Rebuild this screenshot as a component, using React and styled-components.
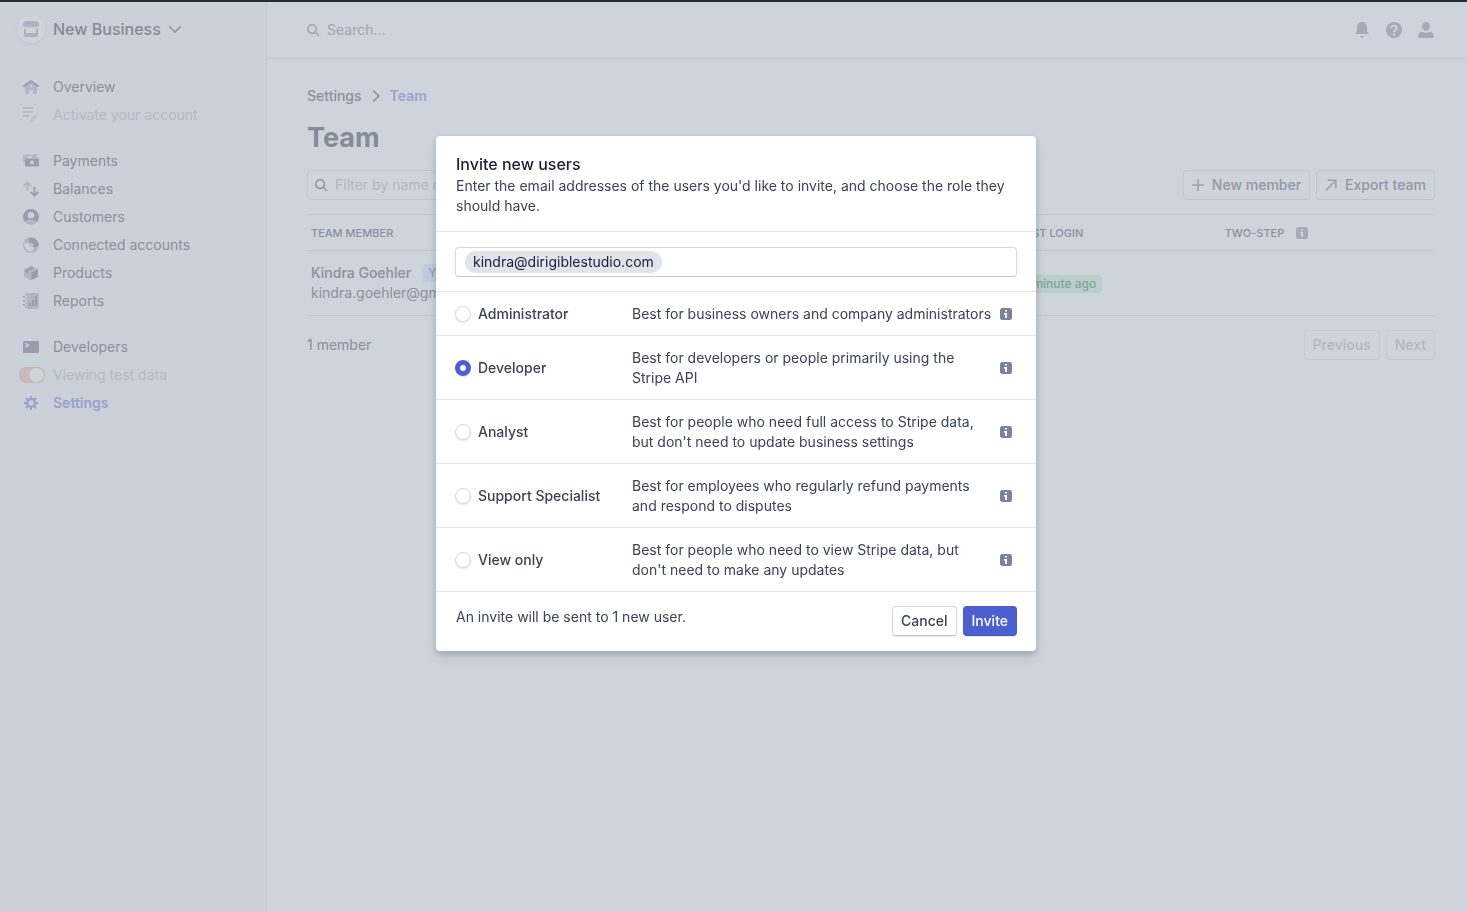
import { useState } from "react";
import styled, { createGlobalStyle } from "styled-components";

const GlobalStyle = createGlobalStyle`
  * {
    box-sizing: border-box;
  }
  body {
    margin: 0;
    background: #cdd4dc;
    color: #8b909e;
    font-family: Inter, "Liberation Sans", sans-serif;
    font-size: 14px;
    line-height: 20px;
  }
  button, input {
    font: inherit;
  }
  h1, h2, p {
    margin: 0;
  }
  svg {
    display: block;
    flex: none;
  }
`;

// ---------- layout ----------

const Page = styled.div`
  display: grid;
  grid-template-columns: 267px 1fr;
  min-height: 100vh;
  border-top: 2px solid #2b2c33;
`;

const Sidebar = styled.aside`
  background: #cad1d9;
  border-right: 1px solid #c2c9d4;
`;

const Content = styled.div`
  min-width: 0;
`;

// ---------- sidebar ----------

const AccountButton = styled.button`
  display: flex;
  align-items: center;
  gap: 8px;
  height: 54px;
  padding: 0 17px;
  border: 0;
  background: none;
  color: #858b98;
  font-size: 16px;
  font-weight: 500;
`;

const Avatar = styled.span`
  display: grid;
  place-items: center;
  width: 28px;
  height: 28px;
  border-radius: 50%;
  background: #cdd4dc;
  box-shadow: 0 1px 3px rgba(110, 120, 150, 0.12);
`;

const NavGroup = styled.nav`
  margin-top: ${(props) => (props.$first ? "17px" : "18px")};
`;

const NavItem = styled.a`
  display: flex;
  align-items: center;
  gap: 8px;
  height: 28px;
  padding: 0 17px;
  color: ${(props) => (props.$active ? "#98a0cf" : props.$muted ? "#b3bac5" : "#8b909e")};
  font-weight: ${(props) => (props.$active ? 600 : 400)};
  text-decoration: none;
`;

const IconSlot = styled.span`
  display: grid;
  place-items: center ${(props) => (props.$end ? "end" : "center")};
  width: 28px;
`;

const Toggle = styled.input`
  appearance: none;
  width: 26px;
  height: 16px;
  margin: 0;
  border-radius: 8px;
  background: radial-gradient(circle at 18px 8px, #cdd4dc 7px, #cbb9bb 8px);
  box-shadow: inset 0 0 0 1px #caaeb0;
`;

// ---------- top bar ----------

const TopBar = styled.header`
  display: flex;
  align-items: center;
  justify-content: space-between;
  height: 57px;
  padding: 0 33px 0 40px;
  border-bottom: 1px solid #c3cad4;
`;

const SearchBox = styled.label`
  display: flex;
  align-items: center;
  gap: 8px;
`;

const PlainInput = styled.input`
  flex: 1;
  min-width: 0;
  padding: 0;
  border: 0;
  outline: 0;
  background: none;
  color: inherit;
  &::placeholder {
    color: ${(props) => props.$hint || "#9fa5b2"};
    opacity: 1;
  }
`;

const TopActions = styled.div`
  display: flex;
  gap: 16px;
`;

const IconButton = styled.button`
  padding: 0;
  border: 0;
  background: none;
  color: #a5abba;
`;

// ---------- team page ----------

const Main = styled.main`
  padding: 27px 32px 40px 40px;
`;

const Breadcrumb = styled.nav`
  display: flex;
  align-items: center;
  gap: 8px;
`;

const Crumb = styled.a`
  color: ${(props) => (props.$current ? "#9ba3d1" : "#8b909e")};
  font-weight: ${(props) => (props.$current ? 600 : 500)};
  text-decoration: none;
`;

const Title = styled.h1`
  margin: 16px 0;
  color: #868b98;
  font-size: 27px;
  font-weight: 700;
  line-height: 32px;
`;

const Toolbar = styled.div`
  display: flex;
  align-items: center;
  justify-content: space-between;
  margin-bottom: 14px;
`;

const FilterBox = styled.label`
  display: flex;
  align-items: center;
  gap: 8px;
  width: 240px;
  height: 30px;
  padding: 0 7px;
  border: 1px solid #c1c8d1;
  border-radius: 4px;
`;

const ButtonRow = styled.div`
  display: flex;
  gap: 6px;
`;

const GhostButton = styled.button`
  display: flex;
  align-items: center;
  gap: 8px;
  height: 30px;
  padding: 0 8px;
  border: 1px solid ${(props) => (props.disabled ? "#c6cdd5" : "#c3c9d2")};
  border-bottom-color: ${(props) => (props.disabled ? "#c3c9d2" : "#b9bfc9")};
  border-radius: 4px;
  background: none;
  color: ${(props) => (props.disabled ? "#b1b7c2" : "#9297a5")};
  font-weight: 500;
`;

const Table = styled.table`
  width: 100%;
  table-layout: fixed;
  border-collapse: separate;
  border-spacing: 0;
  border-top: 1px solid #c1c9d5;
`;

const HeadCell = styled.th`
  width: ${(props) => props.$width};
  height: 36px;
  padding: 0 4px;
  border-bottom: 1px solid #c1c9d5;
  color: #8b909e;
  font-size: 11px;
  font-weight: 500;
  text-align: left;
  text-transform: uppercase;
`;

const HeadLabel = styled.span`
  display: flex;
  align-items: center;
  gap: 12px;
`;

const Cell = styled.td`
  height: 65px;
  padding: 0 4px;
  border-bottom: 1px solid #c1c9d5;
  white-space: nowrap;
`;

const MemberName = styled.div`
  display: flex;
  align-items: center;
  gap: 11px;
  font-weight: 500;
`;

const Badge = styled.span`
  display: inline-block;
  padding: 0 6px;
  border-radius: 4px;
  background: ${(props) => (props.$green ? "#bacfc9" : "#bccddd")};
  color: ${(props) => (props.$green ? "#85a19f" : "#8d9fc4")};
  font-size: 12px;
  font-weight: 500;
  line-height: 18px;
`;

const TableFooter = styled.div`
  display: flex;
  align-items: center;
  justify-content: space-between;
  margin-top: 14px;
`;

// ---------- modal ----------

const Overlay = styled.div`
  position: fixed;
  inset: 0;
  display: flex;
  align-items: flex-start;
  justify-content: center;
  padding: 136px 15px 20px 20px;
`;

const Modal = styled.form`
  width: 100%;
  max-width: 600px;
  border-radius: 4px;
  background: #fff;
  color: #3c4257;
  box-shadow: 0 7px 14px rgba(60, 66, 87, 0.1), 0 3px 6px rgba(0, 0, 0, 0.18);
`;

const ModalHeader = styled.div`
  padding: 16px 20px 15px;
  border-bottom: 1px solid #e3e6ea;
`;

const ModalTitle = styled.h2`
  color: #1a1f36;
  font-size: 16px;
  font-weight: 500;
  line-height: 24px;
`;

const EmailSection = styled.div`
  padding: 15px 19px 14px;
  border-bottom: 1px solid #e3e6ea;
`;

const EmailField = styled.div`
  display: flex;
  align-items: center;
  gap: 6px;
  height: 30px;
  padding: 0 9px;
  border: 1px solid #d8dadf;
  border-bottom-color: #c6c9ce;
  border-radius: 4px;
`;

const Chip = styled.span`
  padding: 0 8px;
  border-radius: 11px;
  background: #e0e4eb;
  color: #1a1f36;
  line-height: 22px;
`;

const RoleRow = styled.div`
  display: grid;
  grid-template-columns: 177px 1fr 12px;
  align-items: center;
  padding: 12px 24px 11px 19px;
  border-bottom: 1px solid #e3e6ea;
`;

const RoleLabel = styled.label`
  display: flex;
  align-items: center;
  gap: 7px;
  font-weight: 500;
`;

const Radio = styled.input`
  appearance: none;
  width: 16px;
  height: 16px;
  margin: 0;
  border: 1px solid #d8dadf;
  border-radius: 50%;
  background: #fff;
  box-shadow: 0 1px 2px rgba(60, 66, 87, 0.12);
  &:checked {
    border: 5px solid #4b5fd0;
  }
`;

const RoleText = styled.p`
  padding-right: 6px;
`;

const ModalFooter = styled.div`
  display: flex;
  align-items: flex-start;
  justify-content: space-between;
  padding: 14px 19px 15px 20px;
`;

const FooterNote = styled.p`
  line-height: 22px;
`;

const ModalButton = styled.button`
  height: 30px;
  padding: 0 8px;
  border: 1px solid ${(props) => (props.$primary ? "#4b5fd0" : "#d6d8dd")};
  border-bottom-color: ${(props) => (props.$primary ? "#4356c0" : "#bfc2c8")};
  border-radius: 4px;
  background: ${(props) => (props.$primary ? "#4b5fd0" : "#fff")};
  color: ${(props) => (props.$primary ? "#fff" : "#3c4257")};
  font-weight: 500;
  box-shadow: 0 1px 2px rgba(60, 66, 87, 0.12);
`;

// ---------- icons ----------

const DARK = "#979eae";
const LIGHT = "#b0b7c4";

const Svg = ({ size = 16, children }) => (
  <svg width={size} height={size} viewBox="0 0 16 16" fill="none" aria-hidden="true">
    {children}
  </svg>
);

const StoreIcon = () => (
  <Svg>
    <path d="M2 0h12l2 2.800V4a2.200 2.200 0 0 1-4 1.200 2.200 2.200 0 0 1-4 0 2.200 2.200 0 0 1-4 0A2.200 2.200 0 0 1 0 4V2.800z" fill="#adb4c1" />
    <path d="M1 7.500h2V12h10V7.500h2v7a1.500 1.500 0 0 1-1.500 1.500h-11A1.500 1.500 0 0 1 1 14.500z" fill="#adb4c1" />
  </Svg>
);

const HomeIcon = () => (
  <Svg>
    <path d="M2 6.500 8 2l6 4.500V14a1 1 0 0 1-1 1h-3v-4H6v4H3a1 1 0 0 1-1-1zM8 6a1.300 1.300 0 1 0 0 2.600A1.300 1.300 0 0 0 8 6z" fill={LIGHT} fillRule="evenodd" />
    <path d="M.8 7.200 8 2l7.200 5.200" stroke={DARK} strokeWidth="2" strokeLinejoin="round" strokeLinecap="round" />
  </Svg>
);

const ActivateIcon = () => (
  <Svg>
    <path d="M0 1h10M0 5h10M0 9h6" stroke="#b2b9c5" strokeWidth="1.800" />
    <path d="m6.200 15.800.8-3 5.600-5.600 2.200 2.200-5.600 5.600zM13.400 6.400l.8-.8a.8.8 0 0 1 1.100 0l1 1a.8.8 0 0 1 0 1.100l-.8.8z" fill="#bdc4ce" />
  </Svg>
);

const PaymentsIcon = () => (
  <Svg>
    <path d="M1 1.500h12a1 1 0 0 1 1 1V5H9.200a2.200 2.200 0 0 0-4.400 0H2v4H1a1 1 0 0 1-1-1V2.500a1 1 0 0 1 1-1z" fill={LIGHT} />
    <path d="M3 5.500h12a1 1 0 0 1 1 1v6a1 1 0 0 1-1 1H3a1 1 0 0 1-1-1v-6a1 1 0 0 1 1-1zm6 2a2 2 0 1 0 0 4 2 2 0 0 0 0-4z" fill={DARK} fillRule="evenodd" />
  </Svg>
);

const BalancesIcon = () => (
  <Svg>
    <path d="M4.500 10V1.500M.8 5l3.700-3.700L8.200 5" stroke={LIGHT} strokeWidth="1.800" />
    <path d="M11.500 6v8.500M7.800 11l3.700 3.700 3.700-3.700" stroke={DARK} strokeWidth="1.800" />
  </Svg>
);

const CustomersIcon = () => (
  <Svg>
    <path d="M2 13c1.500-2 10.500-2 12 0a8 8 0 0 1-12 0z" fill={LIGHT} />
    <path d="M8 0a8 8 0 0 1 6.200 13C11 10.400 5 10.400 1.800 13A8 8 0 0 1 8 0zm0 3a3.200 3.200 0 1 0 0 6.400A3.200 3.200 0 0 0 8 3z" fill={DARK} fillRule="evenodd" />
  </Svg>
);

const ConnectedIcon = () => (
  <Svg>
    <circle cx="8" cy="8" r="8" fill={LIGHT} />
    <path d="M6 6.200v3.800h4.200v4a6.800 6.800 0 0 1-8.800-7.800z" fill="#ccd3db" />
    <path d="M6 1.200h4.500a7 7 0 0 1 4.800 7.800L13.500 10H10V6H6z" fill={DARK} />
    <path d="M6 6h4v4H6z" fill="#bac1cc" />
  </Svg>
);

const ProductsIcon = () => (
  <Svg>
    <path d="M8 .8 14.600 3.800 8 7v8.300L1 12V4z" fill={LIGHT} />
    <path d="M8.300 7.200 15 4v8l-6.700 3.300zM2.500 5.200l6.700-3.100 2.200 1L5 6.300v2.200L2.500 7.300z" fill={DARK} />
  </Svg>
);

const ReportsIcon = () => (
  <Svg>
    <path d="M3.500 0H15a1 1 0 0 1 1 1v14a1 1 0 0 1-1 1H3.500a1 1 0 0 1-1-1V1a1 1 0 0 1 1-1z" fill={LIGHT} />
    <path d="M0 3h2v1.600H0zm0 4h2v1.600H0zm0 4h2v1.600H0zm6-1h2v3H6zm3-3h2v6H9zm3-4h2v10h-2z" fill={DARK} />
    <path d="M2 3h2v1.600H2zm0 4h2v1.600H2zm0 4h2v1.600H2z" fill="#ccd3db" />
  </Svg>
);

const DevelopersIcon = () => (
  <Svg>
    <rect y="2" width="16" height="12" rx="1" fill={DARK} />
    <path d="m2.300 4.300 3.200 1.900-3.200 1.900" stroke="#cad1d9" strokeWidth="1.400" />
  </Svg>
);

const SettingsIcon = () => (
  <Svg>
    <circle cx="8" cy="8" r="3.900" stroke="#98a0cf" strokeWidth="2.200" />
    <path d="M8 1v3M8 12v3M1 8h3M12 8h3M3 3l2.200 2.200M10.800 10.800 13 13M13 3l-2.200 2.200M5.200 10.800 3 13" stroke="#98a0cf" strokeWidth="2" />
  </Svg>
);

const ChevronDown = () => (
  <Svg size={12}>
    <path d="m1 5 7 7 7-7" stroke="#8f95a3" strokeWidth="2.200" strokeLinecap="round" strokeLinejoin="round" />
  </Svg>
);

const ChevronRight = () => (
  <Svg size={12}>
    <path d="m5 1.500 6.500 6.500-6.500 6.500" stroke="#8f95a3" strokeWidth="2.200" strokeLinecap="round" strokeLinejoin="round" />
  </Svg>
);

const SearchIcon = ({ color = "#9da3b1" }) => (
  <Svg size={12}>
    <circle cx="6.800" cy="6.800" r="5.700" stroke={color} strokeWidth="2.100" />
    <path d="m11 11 4 4" stroke={color} strokeWidth="2.200" strokeLinecap="round" />
  </Svg>
);

const PlusIcon = () => (
  <Svg size={12}>
    <path d="M8 1v14M1 8h14" stroke="#9ba1af" strokeWidth="2.200" strokeLinecap="round" />
  </Svg>
);

const ExportIcon = () => (
  <Svg size={12}>
    <path d="M2 14.500 14 2M4.500 1.500h10v10" stroke="#9ba1af" strokeWidth="2" strokeLinecap="round" />
  </Svg>
);

const BellIcon = () => (
  <Svg>
    <path d="M8 0a5 5 0 0 1 5 5v4l1.500 2.200v.8h-13v-.8L3 9V5a5 5 0 0 1 5-5zM5.800 14h4.400a2.300 2.300 0 0 1-4.400 0z" fill="currentColor" />
  </Svg>
);

const HelpIcon = () => (
  <Svg>
    <circle cx="8" cy="8" r="8" fill="currentColor" />
    <path d="M5.300 6.300a2.700 2.500 0 1 1 4.300 1.900c-.9.600-1.600.8-1.600 1.800" stroke="#cdd4dc" strokeWidth="2" />
    <circle cx="8" cy="12.500" r="1.300" fill="#cdd4dc" />
  </Svg>
);

const UserIcon = () => (
  <Svg>
    <path d="M8 0c2.300 0 3.800 1.600 3.800 4.200S10.200 9 8 9 4.200 6.800 4.200 4.200 5.700 0 8 0zM4.500 9.800c2 1.300 5 1.300 7 0 2.600.5 4.500 2 4.500 4.200v1a1 1 0 0 1-1 1H1a1 1 0 0 1-1-1v-1c0-2.200 1.900-3.700 4.500-4.200z" fill="currentColor" />
  </Svg>
);

const InfoIcon = ({ color = "#79849a", mark = "#fff" }) => (
  <svg width="12" height="12" viewBox="0 0 12 12" role="img" aria-label="More information">
    <rect width="12" height="12" rx="2.500" fill={color} />
    <path d="M5 2h2v1.600H5zM4 5h3v5H5.200V6.500H4z" fill={mark} />
  </svg>
);

// ---------- data ----------

const navGroups = [
  [
    { label: "Overview", Icon: HomeIcon },
    { label: "Activate your account", Icon: ActivateIcon, muted: true },
  ],
  [
    { label: "Payments", Icon: PaymentsIcon },
    { label: "Balances", Icon: BalancesIcon },
    { label: "Customers", Icon: CustomersIcon },
    { label: "Connected accounts", Icon: ConnectedIcon },
    { label: "Products", Icon: ProductsIcon },
    { label: "Reports", Icon: ReportsIcon },
  ],
  [
    { label: "Developers", Icon: DevelopersIcon },
    { label: "Viewing test data", toggle: true, muted: true },
    { label: "Settings", Icon: SettingsIcon, active: true },
  ],
];

const roles = [
  { id: "administrator", name: "Administrator", text: "Best for business owners and company administrators" },
  { id: "developer", name: "Developer", text: "Best for developers or people primarily using the Stripe API" },
  { id: "analyst", name: "Analyst", text: "Best for people who need full access to Stripe data, but don't need to update business settings" },
  { id: "support", name: "Support Specialist", text: "Best for employees who regularly refund payments and respond to disputes" },
  { id: "view", name: "View only", text: "Best for people who need to view Stripe data, but don't need to make any updates" },
];

const InviteModal = () => {
  const [role, setRole] = useState("developer");

  return (
    <Overlay>
      <Modal role="dialog" aria-labelledby="invite-title" onSubmit={(e) => e.preventDefault()}>
        <ModalHeader>
          <ModalTitle id="invite-title">Invite new users</ModalTitle>
          <p>Enter the email addresses of the users you'd like to invite, and choose the role they should have.</p>
        </ModalHeader>
        <EmailSection>
          <EmailField>
            <Chip>kindra@dirigiblestudio.com</Chip>
            <PlainInput type="email" aria-label="Email addresses" />
          </EmailField>
        </EmailSection>
        {roles.map(({ id, name, text }) => (
          <RoleRow key={id}>
            <RoleLabel>
              <Radio type="radio" name="role" value={id} checked={role === id} onChange={() => setRole(id)} />
              {name}
            </RoleLabel>
            <RoleText>{text}</RoleText>
            <InfoIcon />
          </RoleRow>
        ))}
        <ModalFooter>
          <FooterNote>An invite will be sent to 1 new user.</FooterNote>
          <ButtonRow>
            <ModalButton type="button">Cancel</ModalButton>
            <ModalButton type="submit" $primary>Invite</ModalButton>
          </ButtonRow>
        </ModalFooter>
      </Modal>
    </Overlay>
  );
};

export default function App() {
  const [testData, setTestData] = useState(true);

  return (
    <>
      <GlobalStyle />
      <Page>
        <Sidebar>
          <AccountButton>
            <Avatar><StoreIcon /></Avatar>
            New Business
            <ChevronDown />
          </AccountButton>
          {navGroups.map((items, i) => (
            <NavGroup key={i} $first={i === 0}>
              {items.map(({ label, Icon, toggle, muted, active }) =>
                toggle ? (
                  <NavItem as="label" key={label} $muted={muted}>
                    <IconSlot $end>
                      <Toggle type="checkbox" checked={testData} onChange={() => setTestData(!testData)} />
                    </IconSlot>
                    {label}
                  </NavItem>
                ) : (
                  <NavItem href="#" key={label} $muted={muted} $active={active}>
                    <IconSlot><Icon /></IconSlot>
                    {label}
                  </NavItem>
                )
              )}
            </NavGroup>
          ))}
        </Sidebar>

        <Content>
          <TopBar>
            <SearchBox>
              <SearchIcon />
              <PlainInput type="text" placeholder="Search..." aria-label="Search" />
            </SearchBox>
            <TopActions>
              <IconButton aria-label="Notifications"><BellIcon /></IconButton>
              <IconButton aria-label="Help"><HelpIcon /></IconButton>
              <IconButton aria-label="Profile"><UserIcon /></IconButton>
            </TopActions>
          </TopBar>

          <Main>
            <Breadcrumb>
              <Crumb href="#">Settings</Crumb>
              <ChevronRight />
              <Crumb href="#" $current>Team</Crumb>
            </Breadcrumb>
            <Title>Team</Title>
            <Toolbar>
              <FilterBox>
                <SearchIcon color="#8f95a3" />
                <PlainInput type="text" placeholder="Filter by name or email..." aria-label="Filter members" $hint="#b1b8c3" />
              </FilterBox>
              <ButtonRow>
                <GhostButton><PlusIcon />New member</GhostButton>
                <GhostButton><ExportIcon />Export team</GhostButton>
              </ButtonRow>
            </Toolbar>
            <Table>
              <thead>
                <tr>
                  <HeadCell $width="31%">Team member</HeadCell>
                  <HeadCell $width="31.7%">Role</HeadCell>
                  <HeadCell $width="18.3%">Last login</HeadCell>
                  <HeadCell $width="19%">
                    <HeadLabel>Two-step <InfoIcon color="#a5abba" mark="#cdd4dc" /></HeadLabel>
                  </HeadCell>
                </tr>
              </thead>
              <tbody>
                <tr>
                  <Cell>
                    <MemberName>Kindra Goehler <Badge>You</Badge></MemberName>
                    kindra.goehler@gmail.com
                  </Cell>
                  <Cell>Owner</Cell>
                  <Cell><Badge $green>1 minute ago</Badge></Cell>
                  <Cell />
                </tr>
              </tbody>
            </Table>
            <TableFooter>
              <span>1 member</span>
              <ButtonRow>
                <GhostButton disabled>Previous</GhostButton>
                <GhostButton disabled>Next</GhostButton>
              </ButtonRow>
            </TableFooter>
          </Main>
        </Content>
      </Page>
      <InviteModal />
    </>
  );
}
